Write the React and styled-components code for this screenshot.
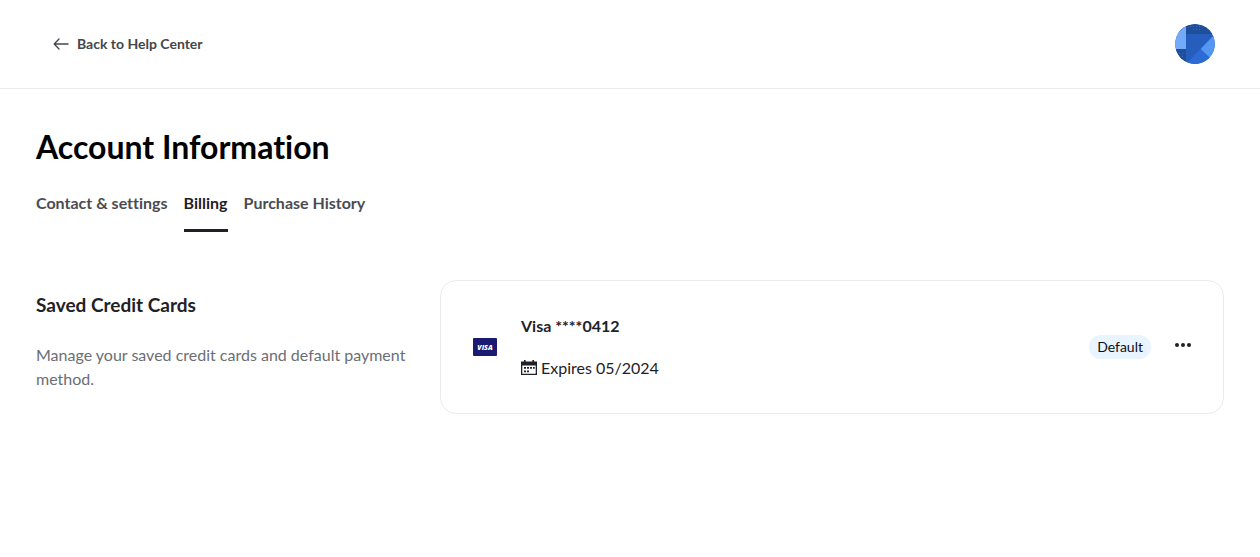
import React from "react";
import styled, { createGlobalStyle } from "styled-components";

const GlobalStyle = createGlobalStyle`
  *, *::before, *::after { box-sizing: border-box; }
  body {
    margin: 0;
    background: #fff;
    color: #1f2126;
    font-family: Lato, "Liberation Sans", sans-serif;
    font-size: 16px;
    line-height: 24px;
    font-variant-ligatures: none;
  }
  h1, h2, h3, p { margin: 0; }
  button { font: inherit; color: inherit; background: none; border: 0; padding: 0; cursor: pointer; }
  svg { display: block; flex: none; }
`;

const Header = styled.header`
  display: flex;
  align-items: center;
  justify-content: space-between;
  padding: 24px 45px 24px 53px;
  border-bottom: 1px solid #ebebeb;
`;

const BackLink = styled.a`
  display: flex;
  align-items: center;
  gap: 8px;
  color: #43454b;
  font-size: 14px;
  font-weight: 700;
  text-decoration: none;
`;

const AvatarButton = styled.button`
  border-radius: 50%;
  overflow: hidden;
`;

const Main = styled.main`
  padding: 38px 36px;
`;

const Title = styled.h1`
  color: #000;
  font-size: 32px;
  font-weight: 700;
  line-height: 40px;
`;

const Tabs = styled.nav`
  display: flex;
  gap: 16px;
  margin-top: 16px;
`;

const Tab = styled.a`
  padding: 8px 0 14px;
  border-bottom: 3px solid ${(p) => (p.$active ? "#1f2126" : "transparent")};
  color: ${(p) => (p.$active ? "#1f2126" : "#4a4c52")};
  font-weight: 700;
  text-decoration: none;
`;

const Section = styled.section`
  display: grid;
  grid-template-columns: repeat(12, 1fr);
  column-gap: 24px;
  margin-top: 48px;
`;

const Intro = styled.div`
  grid-column: span 4;
  padding-top: 11px;
`;

const SectionTitle = styled.h2`
  font-size: 19px;
  font-weight: 700;
  line-height: 28px;
`;

const Description = styled.p`
  margin-top: 24px;
  color: #6b6e75;
`;

const Card = styled.article`
  grid-column: span 8;
  display: flex;
  align-items: center;
  gap: 24px;
  padding: 32px;
  border: 1px solid #ebebeb;
  border-radius: 16px;
`;

const CardDetails = styled.div`
  flex: 1;
  display: flex;
  flex-direction: column;
  gap: 18px;
  padding: 1px 0;
`;

const CardName = styled.h3`
  font-size: 16px;
  font-weight: 700;
  line-height: 24px;
`;

const Expiry = styled.p`
  display: flex;
  align-items: center;
  gap: 4px;
`;

const Badge = styled.span`
  padding: 0 8px;
  border-radius: 12px;
  background: #e8f4ff;
  color: #0c0d10;
  font-size: 14px;
`;

const MenuButton = styled.button`
  padding-bottom: 4px;
`;

function ArrowIcon() {
  return (
    <svg width="16" height="16" viewBox="0 0 16 16" fill="none" stroke="currentColor" strokeWidth="1.3" strokeLinecap="round" strokeLinejoin="round" aria-hidden="true">
      <path d="M15 8H1.2M6 3 1.2 8 6 13" />
    </svg>
  );
}

function Avatar() {
  return (
    <svg width="40" height="40" viewBox="0 0 40 40" aria-hidden="true">
      <defs>
        <clipPath id="avatar-circle"><circle cx="20" cy="20" r="20" /></clipPath>
      </defs>
      <g clipPath="url(#avatar-circle)">
        <path fill="#265ebd" d="M0 0h40v40H0z" />
        <path fill="#1f4e9a" d="M0 0h40v10H0z" />
        <path fill="#72abf7" d="M0 0h11v25H0z" />
        <path fill="#1f4e9a" d="M0 25h11v15H0z" />
        <path fill="#5596f2" d="M40 10v29L25.500 25z" />
        <path fill="#2c6ad6" d="M25.500 25 40 39v1H11z" />
        <path stroke="#3c69b0" strokeWidth="1" strokeDasharray="1 2" d="M15 2.500h10M18 5.500h7M4 29.500h6M4 32.500h6" />
      </g>
    </svg>
  );
}

const VisaText = styled.text`
  font-family: "Open Sans", "Liberation Sans", sans-serif;
  font-size: 7px;
  font-weight: 800;
  font-style: italic;
  fill: #fff;
`;

function VisaLogo() {
  return (
    <svg width="24" height="18" viewBox="0 0 24 18" role="img" aria-label="Visa">
      <rect width="24" height="18" rx="1" fill="#1a1a70" />
      <VisaText x="12" y="12" textAnchor="middle">VISA</VisaText>
    </svg>
  );
}

function CalendarIcon() {
  return (
    <svg width="16" height="16" viewBox="0 0 16 16" fill="#1f2126" aria-hidden="true">
      <path fillRule="evenodd" d="M3 0h1.600v1.500h6.800V0H13v1.500h3V15H0V1.500h3zM1.300 5.500v8.200h13.400V5.500z" />
      <path d="M6 7h2v1.700H6zM9 7h2v1.700H9zM12 7h1.700v1.700H12zM3 7h2v1.700H3zM3 10.500h2v1.700H3zM6 10.500h2v1.700H6z" />
    </svg>
  );
}

function DotsIcon() {
  return (
    <svg width="16" height="16" viewBox="0 0 16 16" fill="#1f2126" aria-hidden="true">
      <circle cx="2" cy="8" r="2" />
      <circle cx="8" cy="8" r="2" />
      <circle cx="14" cy="8" r="2" />
    </svg>
  );
}

export default function App() {
  return (
    <>
      <GlobalStyle />
      <Header>
        <BackLink href="#help"><ArrowIcon />Back to Help Center</BackLink>
        <AvatarButton type="button" aria-label="Account menu"><Avatar /></AvatarButton>
      </Header>
      <Main>
        <Title>Account Information</Title>
        <Tabs aria-label="Account sections">
          <Tab href="#contact">Contact &amp; settings</Tab>
          <Tab href="#billing" $active aria-current="page">Billing</Tab>
          <Tab href="#history">Purchase History</Tab>
        </Tabs>
        <Section>
          <Intro>
            <SectionTitle>Saved Credit Cards</SectionTitle>
            <Description>Manage your saved credit cards and default payment method.</Description>
          </Intro>
          <Card>
            <VisaLogo />
            <CardDetails>
              <CardName>Visa ****0412</CardName>
              <Expiry><CalendarIcon />Expires 05/2024</Expiry>
            </CardDetails>
            <Badge>Default</Badge>
            <MenuButton type="button" aria-label="Card options"><DotsIcon /></MenuButton>
          </Card>
        </Section>
      </Main>
    </>
  );
}
